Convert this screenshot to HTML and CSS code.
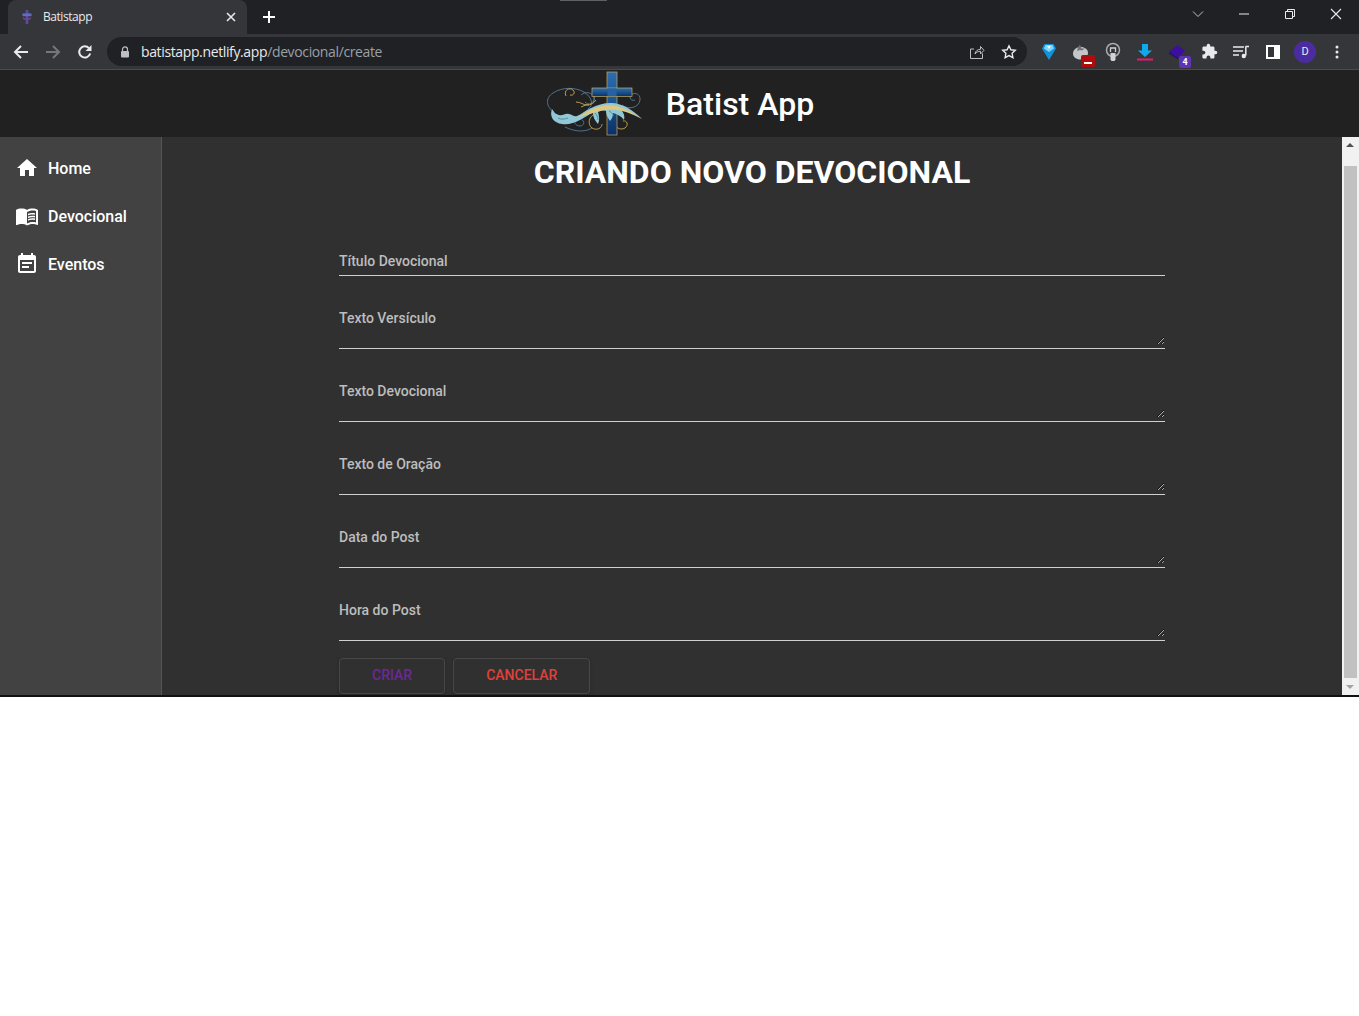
FILE: index.html
```html
<!DOCTYPE html>
<html lang="pt-BR">
<head>
    <meta charset="UTF-8">
    <meta name="viewport" content="width=device-width, initial-scale=1.0">
    <title>Batistapp</title>
    <link rel="stylesheet" href="styles.css">
</head>
<body>
    <!-- navegador -->
    <div class="tabstrip">
        <span class="strip-mark"></span>
        <div class="tab">
            <svg class="favicon" viewBox="0 0 12 14">
                <rect x="4.6" y="0" width="2.8" height="14" fill="#5a4a9e"/>
                <rect x="1.500" y="3.400" width="9" height="2.800" fill="#5c6fc0"/>
                <path d="M2 7c2 2 6 2 8 0v2c-2 1.500-6 1.500-8 0z" fill="#7a3f8e"/>
            </svg>
            <span class="tab-title">Batistapp</span>
            <svg class="tab-close" viewBox="0 0 10 10"><path d="M1 1l8 8M9 1l-8 8" stroke="#e8eaed" stroke-width="1.6"/></svg>
        </div>
        <svg class="new-tab" viewBox="0 0 14 14"><path d="M7 1v12M1 7h12" stroke="#fff" stroke-width="2"/></svg>
        <div class="win-controls">
            <span class="win-btn"><svg viewBox="0 0 12 12" width="12" height="12"><path d="M1 3.500l5 5 5-5" fill="none" stroke="#bdc1c6"/></svg></span>
            <span class="win-btn"><svg viewBox="0 0 12 12" width="12" height="12"><path d="M1 6h10" stroke="#e8eaed"/></svg></span>
            <span class="win-btn"><svg viewBox="0 0 12 12" width="12" height="12"><path d="M3.500 3V1.500h7v7H9M1.500 3.500h7v7h-7z" fill="none" stroke="#e8eaed"/></svg></span>
            <span class="win-btn"><svg viewBox="0 0 12 12" width="12" height="12"><path d="M1 1l10 10M11 1L1 11" stroke="#e8eaed" stroke-width="1.100"/></svg></span>
        </div>
    </div>
    <div class="toolbar">
        <span class="tool"><svg viewBox="0 0 16 16" width="16" height="16"><path d="M15 8H2.500M8 2L2 8l6 6" fill="none" stroke="#e8eaed" stroke-width="2"/></svg></span>
        <span class="tool"><svg viewBox="0 0 16 16" width="16" height="16"><path d="M1 8h12.500M8 2l6 6-6 6" fill="none" stroke="#75777b" stroke-width="2"/></svg></span>
        <span class="tool"><svg viewBox="0 0 16 16" width="16" height="16"><path d="M13.200 9.500A5.600 5.600 0 1 1 12 4.200" fill="none" stroke="#e8eaed" stroke-width="2"/><path d="M14.500 1v6h-6z" fill="#e8eaed"/></svg></span>
        <div class="omnibox">
            <svg class="lock" viewBox="0 0 10 12" width="10" height="12"><path d="M2.500 5V3.400a2.500 2.500 0 0 1 5 0V5" fill="none" stroke="#bdc1c6" stroke-width="1.200"/><rect x="1" y="5" width="8" height="6.500" rx="1" fill="#bdc1c6"/></svg>
            <span class="url"><span class="url-host">batistapp.netlify.app</span>/devocional/create</span>
            <span class="tool"><svg viewBox="0 0 16 16" width="16" height="16"><path d="M13.500 9.500V14.500H1.500V5H5M6 10c.4-3 2.600-4.700 5.500-4.700V2.500L15 6.300l-3.500 3.700V7.300C9.300 7.300 7.500 8 6 10z" fill="none" stroke="#bdc1c6"/></svg></span>
            <span class="tool"><svg viewBox="0 0 16 16" width="16" height="16"><path d="M8 1.800l1.900 4 4.400.5-3.200 3 .8 4.400L8 11.600l-3.900 2.100.8-4.400-3.200-3 4.400-.5z" fill="none" stroke="#e8eaed" stroke-width="1.400"/></svg></span>
        </div>
        <div class="ext-list">
            <span class="tool"><svg viewBox="0 0 14 18" width="14" height="18"><path d="M2.500 1h9L14 5.500 7 17 0 5.500z" fill="#1392dc"/><path d="M3.500 2h7L12 5.500 7 9 2 5.500z" fill="#7fd6fa"/><path d="M5 3h4L7 6z" fill="#e4f8ff"/></svg></span>
            <span class="tool badge-wrap">
                <svg viewBox="0 0 18 18" width="18" height="18"><path d="M8.500 4c4.500 0 7.500 2.500 7.500 6s-3 6.500-7.500 6.500S1 14 1 10.500 4 4 8.500 4z" fill="#c4c6c8"/><path d="M8 1.500l1.500 4 3.500 0-3 2-2-.5-3 1 1-3.500z" fill="#6f7275"/></svg>
                <span class="badge badge-red"><i></i></span>
            </span>
            <span class="tool"><svg viewBox="0 0 16 20" width="16" height="20"><circle cx="8" cy="8" r="6.500" fill="none" stroke="#a9abae" stroke-width="1.500"/><path d="M5.500 11h5v6.500l-1 1.500h-3l-1-1.500z" fill="#d0d2d4"/><path d="M5.500 10V6h5v4" fill="none" stroke="#d0d2d4" stroke-width="1.300"/></svg></span>
            <span class="tool"><svg viewBox="0 0 16 18" width="16" height="18"><path d="M5 1h6v6.500h4L8 14 1 7.500h4z" fill="#12a9ea"/><rect x="0" y="15.500" width="16" height="2" fill="#e6196e"/></svg></span>
            <span class="tool badge-wrap">
                <svg viewBox="0 0 18 16" width="18" height="16"><path d="M9 1l8 5.500-7 7.500-9-6z" fill="#3d0f9e"/><path d="M1 8l9 6 0 1.500-9-6z" fill="#26105e"/></svg>
                <span class="badge badge-purple">4</span>
            </span>
            <span class="tool"><svg viewBox="0 0 24 24" width="17" height="17"><path fill="#e8eaed" d="M20.500 11H19V7c0-1.100-.9-2-2-2h-4V3.500a2.500 2.500 0 0 0-5 0V5H4c-1.100 0-1.990.9-1.990 2v3.800H3.500c1.490 0 2.700 1.210 2.700 2.700s-1.210 2.700-2.700 2.700H2V20c0 1.100.9 2 2 2h3.800v-1.500c0-1.490 1.210-2.700 2.700-2.700s2.700 1.210 2.700 2.700V22H17c1.100 0 2-.9 2-2v-4h1.500a2.500 2.500 0 0 0 0-5z"/></svg></span>
            <span class="tool"><svg viewBox="0 0 16 16" width="16" height="16"><path d="M0 3h11M0 7h10M0 11h6" stroke="#e8eaed" stroke-width="1.500"/><path d="M12.500 2.500H16M12.800 2.500v9" fill="none" stroke="#e8eaed" stroke-width="1.500"/><circle cx="10.800" cy="12" r="2.200" fill="#e8eaed"/></svg></span>
            <span class="tool"><svg viewBox="0 0 14 14" width="14" height="14"><rect x="1" y="1" width="12" height="12" fill="none" stroke="#fff" stroke-width="2"/><rect x="8" y="1" width="5" height="12" fill="#fff"/></svg></span>
            <span class="tool"><span class="avatar">D</span></span>
            <span class="tool"><svg viewBox="0 0 4 14" width="4" height="14"><circle cx="2" cy="2" r="1.500" fill="#e8eaed"/><circle cx="2" cy="7" r="1.500" fill="#e8eaed"/><circle cx="2" cy="12" r="1.500" fill="#e8eaed"/></svg></span>
        </div>
    </div>

    <!-- app -->
    <header class="app-header">
        <svg class="logo" viewBox="0 0 100 66" width="100" height="66">
            <defs>
                <linearGradient id="crossFill" x1="0" y1="0" x2="0" y2="1">
                    <stop offset="0" stop-color="#2f6cae"/>
                    <stop offset=".45" stop-color="#1d568f"/>
                    <stop offset="1" stop-color="#0c2f66"/>
                </linearGradient>
            </defs>
            <!-- espirais -->
            <g fill="none" stroke="#5a87ab" stroke-width=".8">
                <path d="M9 41C1 36 0 27 8 22c9-6 22-6 31-1 8 5 10 13 4 17"/>
                <path d="M20 56c8 4 19 6 27 1"/>
                <path d="M36 24c4-4 12-3 13 3 1 5-6 8-9 4"/>
                <path d="M77 34c6 5 17 3 18-5 1-7-8-9-10-3 0 3 3 4 5 3"/>
                <path d="M30 46c-2 4 0 9 5 9 4 0 5-5 2-6"/>
                <path d="M48 21c2 4 2 7 0 10"/>
            </g>
            <g fill="none" stroke="#c9a75b" stroke-width=".9">
                <path d="M21 25c-3-6 4-9 7-6 3 3 0 6-3 5"/>
                <path d="M50 43c-6 2-8 10-3 14 5 3 10 0 10-4"/>
                <path d="M69 50c0 6 6 10 11 7 4-3 2-8-2-7"/>
                <path d="M31 31c5 0 7 3 11 3 4 0 7-2 9-5"/>
                <path d="M36 36c3-1 5-3 8-2"/>
            </g>
            <!-- cruz -->
            <rect x="62" y="1" width="10" height="63" fill="url(#crossFill)" stroke="#c2ac66" stroke-width=".7"/>
            <rect x="47" y="17" width="40" height="8.500" fill="url(#crossFill)" stroke="#c2ac66" stroke-width=".7"/>
            <rect x="62.400" y="17.400" width="9.200" height="7.700" fill="#2562a4"/>
            <!-- onda -->
            <path d="M7 38c2 3 3 5 7 6 4 1 6-2 10-1 3 .5 5 3 8 2 5-2 9-6 14-8 6-3 12-5 20-5 12 0 23 8 31 16-8-5-15-8-21-9 3 3 4 6 3 10-3-4-7-6-11-7 0 3-1 6-3 8-2-3-4-6-4-10-3-1-6 0-8 1 1 4 2 8 0 12-3-3-5-7-5-11-4 1-9 5-13 7-6 3-12 5-18 4C9 52 4 46 7 38z" fill="#92c8d6"/>
            <path d="M33 46c7-4 14-9 24-11 13-3 27 4 40 13-12-6-24-11-36-9-10 1-18 5-28 7z" fill="#e0c77f"/>
            <path d="M13 47c3 2 7 1 10 0M50 42c2 2 3 4 3 7M64 40c2 1 4 3 5 5" fill="none" stroke="#3f7f94" stroke-width=".8"/>
        </svg>
        <span class="app-name">Batist App</span>
    </header>

    <div class="app-body">
        <nav class="sidebar">
            <a class="nav-item">
                <svg viewBox="0 0 24 24" width="24" height="24"><path d="M10 20v-6h4v6h5v-8h3L12 3 2 12h3v8z"/></svg>
                <span>Home</span>
            </a>
            <a class="nav-item">
                <svg viewBox="0 0 24 24" width="24" height="24"><path d="M21 5c-1.110-.35-2.330-.5-3.500-.5-1.950 0-4.050.4-5.500 1.500-1.450-1.100-3.550-1.500-5.500-1.500S2.450 4.900 1 6v14.650c0 .25.25.5.5.5.1 0 .15-.05.25-.05C3.100 20.450 5.050 20 6.500 20c1.950 0 4.050.4 5.500 1.500 1.350-.85 3.800-1.500 5.500-1.500 1.650 0 3.350.3 4.750 1.050.1.05.15.05.25.05.25 0 .5-.25.5-.5V6c-.6-.45-1.250-.75-2-1zm0 13.500c-1.100-.35-2.300-.5-3.500-.5-1.700 0-4.150.65-5.500 1.500V8c1.350-.85 3.800-1.500 5.500-1.500 1.200 0 2.400.15 3.500.5v11.500z"/><path d="M17.500 10.500c.88 0 1.730.09 2.500.26V9.240c-.79-.15-1.640-.24-2.500-.24-1.700 0-3.240.29-4.500.83v1.660c1.130-.64 2.700-.99 4.500-.99zM13 12.490v1.660c1.130-.64 2.700-.99 4.500-.99.88 0 1.730.09 2.500.26V11.900c-.79-.15-1.640-.24-2.500-.24-1.700 0-3.240.3-4.500.83zM17.500 14.330c-1.700 0-3.240.29-4.500.83v1.660c1.130-.64 2.700-.99 4.500-.99.88 0 1.730.09 2.500.26v-1.520c-.79-.16-1.640-.24-2.500-.24z"/><path d="M2 7c1.500-1 3-1.500 4.500-1.500S10 6 11 6.800v12.400c-1.500-.8-3-1.200-4.500-1.200S3.500 18.300 2 19z"/></svg>
                <span>Devocional</span>
            </a>
            <a class="nav-item">
                <svg viewBox="0 0 24 24" width="24" height="24"><path d="M17 10H7v2h10v-2zm2-7h-1V1h-2v2H8V1H6v2H5c-1.110 0-1.990.9-1.990 2L3 19c0 1.100.89 2 2 2h14c1.100 0 2-.9 2-2V5c0-1.100-.9-2-2-2zm0 16H5V8h14v11zm-5-5H7v2h7v-2z"/></svg>
                <span>Eventos</span>
            </a>
        </nav>
        <main class="content">
            <h1 class="page-title">CRIANDO NOVO DEVOCIONAL</h1>
            <form class="form">
                <div class="field field-input"><input type="text" placeholder="Título Devocional"></div>
                <div class="field"><textarea placeholder="Texto Versículo"></textarea></div>
                <div class="field"><textarea placeholder="Texto Devocional"></textarea></div>
                <div class="field"><textarea placeholder="Texto de Oração"></textarea></div>
                <div class="field"><textarea placeholder="Data do Post"></textarea></div>
                <div class="field"><textarea placeholder="Hora do Post"></textarea></div>
                <div class="actions">
                    <button type="button" class="btn btn-create">CRIAR</button>
                    <button type="button" class="btn btn-cancel">CANCELAR</button>
                </div>
            </form>
        </main>
        <div class="scrollbar">
            <span class="arrow arrow-up"></span>
            <span class="thumb"></span>
            <span class="arrow arrow-down"></span>
        </div>
    </div>
</body>
</html>
```
FILE: styles.css
```css
* {
    margin: 0;
    padding: 0;
    box-sizing: border-box;
}
body {
    background: #fff;
    font-family: Roboto, sans-serif;
}

/* navegador */
.tabstrip {
    height: 34px;
    background: #202124;
    display: flex;
    align-items: flex-end;
    padding-left: 8px;
    position: relative;
}
.strip-mark {
    position: absolute;
    top: 0;
    left: 560px;
    width: 47px;
    height: 1px;
    background: #5f6064;
}
.tab {
    width: 239px;
    height: 34px;
    background: #35363a;
    border-radius: 8px 8px 0 0;
    display: flex;
    align-items: center;
    padding: 0 11px 0 13px;
}
.favicon {
    width: 12px;
    height: 14px;
}
.tab-title {
    margin-left: 10px;
    flex: 1;
    color: #e8eaed;
    font: 12px/16px "Open Sans", sans-serif;
    letter-spacing: -0.45px;
}
.tab-close {
    width: 10px;
    height: 10px;
}
.new-tab {
    width: 14px;
    height: 14px;
    margin: 0 0 10px 15px;
}
.win-controls {
    margin-left: auto;
    align-self: stretch;
    display: flex;
    padding-bottom: 6px;
}
.win-btn {
    width: 46px;
    display: flex;
    align-items: center;
    justify-content: center;
}
.toolbar {
    height: 36px;
    background: #35363a;
    border-bottom: 1px solid #4a4b4f;
    display: flex;
    align-items: center;
    padding: 0 6px 0 5px;
}
.tool {
    width: 32px;
    height: 28px;
    flex: none;
    display: flex;
    align-items: center;
    justify-content: center;
}
.omnibox {
    width: 920px;
    height: 29px;
    margin-left: 6px;
    border-radius: 15px;
    background: #202124;
    display: flex;
    align-items: center;
    padding-left: 13px;
    padding-right: 2px;
}
.lock {
    flex: none;
}
.url {
    flex: 1;
    margin-left: 11px;
    color: #9aa0a6;
    font: 14px "Open Sans", sans-serif;
    letter-spacing: -0.37px;
}
.url-host {
    color: #e8eaed;
}
.ext-list {
    margin-left: 6px;
    display: flex;
}
.badge-wrap {
    position: relative;
}
.badge {
    position: absolute;
    bottom: 0;
    border-radius: 2px;
    color: #fff;
    font: bold 9px/12px Roboto, sans-serif;
    text-align: center;
}
.badge-red {
    width: 14px;
    height: 12px;
    background: #b00c0c;
    right: 2px;
    bottom: -1px;
}
.badge-red i {
    display: block;
    width: 8px;
    height: 2px;
    margin: 7px auto 0;
    background: #fff;
}
.badge-purple {
    background: #5b35b5;
    width: 12px;
    height: 12px;
    right: 2px;
    bottom: -2px;
}
.avatar {
    width: 22px;
    height: 22px;
    border-radius: 50%;
    background: #4a2ca0;
    color: #e8eaed;
    font: 11px/22px Roboto, sans-serif;
    text-align: center;
}

/* app */
.app-header {
    height: 67px;
    background: #212121;
    display: flex;
    align-items: center;
    justify-content: center;
    gap: 21px;
}
.app-name {
    color: #fff;
    font-size: 32px;
    font-weight: 500;
}
.app-body {
    height: 560px;
    display: flex;
    border-bottom: 2px solid #111;
}
.sidebar {
    width: 162px;
    background: #424242;
    border-right: 1px solid #555;
    padding-top: 7px;
}
.nav-item {
    height: 48px;
    display: flex;
    align-items: center;
    padding-left: 15px;
    gap: 9px;
    color: #fff;
    font-size: 16px;
    font-weight: 500;
}
.nav-item svg {
    fill: #fff;
    flex: none;
}
.content {
    flex: 1;
    background: #303030;
    overflow: hidden;
}
.page-title {
    color: #fff;
    font-size: 32px;
    font-weight: 700;
    line-height: 37px;
    text-align: center;
    margin-top: 17px;
}
.form {
    width: 826px;
    margin: 0 auto;
}
.field {
    height: 73px;
    border-bottom: 1px solid #cfcfcf;
}
.field-input {
    height: 85px;
    padding-top: 62px;
}
.field input,
.field textarea {
    display: block;
    width: 100%;
    background: transparent;
    border: 0;
    outline: 0;
    color: #fff;
    font: 500 14px/16px Roboto, sans-serif;
}
.field input::placeholder,
.field textarea::placeholder {
    color: #bdbdbd;
    opacity: 1;
}
.field textarea {
    height: 69px;
    padding-top: 34px;
}
.actions {
    display: flex;
    gap: 8px;
    margin-top: 17px;
}
.btn {
    height: 36px;
    padding: 0 32px 2px;
    background: transparent;
    border: 1px solid #474747;
    border-radius: 4px;
    font: 500 14px Roboto, sans-serif;
    box-shadow: 0 2px 4px rgba(0, 0, 0, 0.15);
}
.btn-create {
    color: #6f2799;
}
.btn-cancel {
    color: #e0403a;
}
.scrollbar {
    width: 17px;
    background: #f1f1f1;
    display: flex;
    flex-direction: column;
    align-items: center;
}
.arrow {
    flex: none;
    width: 17px;
    height: 17px;
    position: relative;
}
.arrow::after {
    content: "";
    position: absolute;
    left: 4px;
    border-left: 4px solid transparent;
    border-right: 4px solid transparent;
}
.arrow-up::after {
    top: 6px;
    border-bottom: 4px solid #505050;
}
.arrow-down::after {
    top: 7px;
    border-top: 4px solid #a3a3a3;
}
.thumb {
    flex: 1;
    width: 13px;
    margin-top: 12px;
    background: #c1c1c1;
}
```
